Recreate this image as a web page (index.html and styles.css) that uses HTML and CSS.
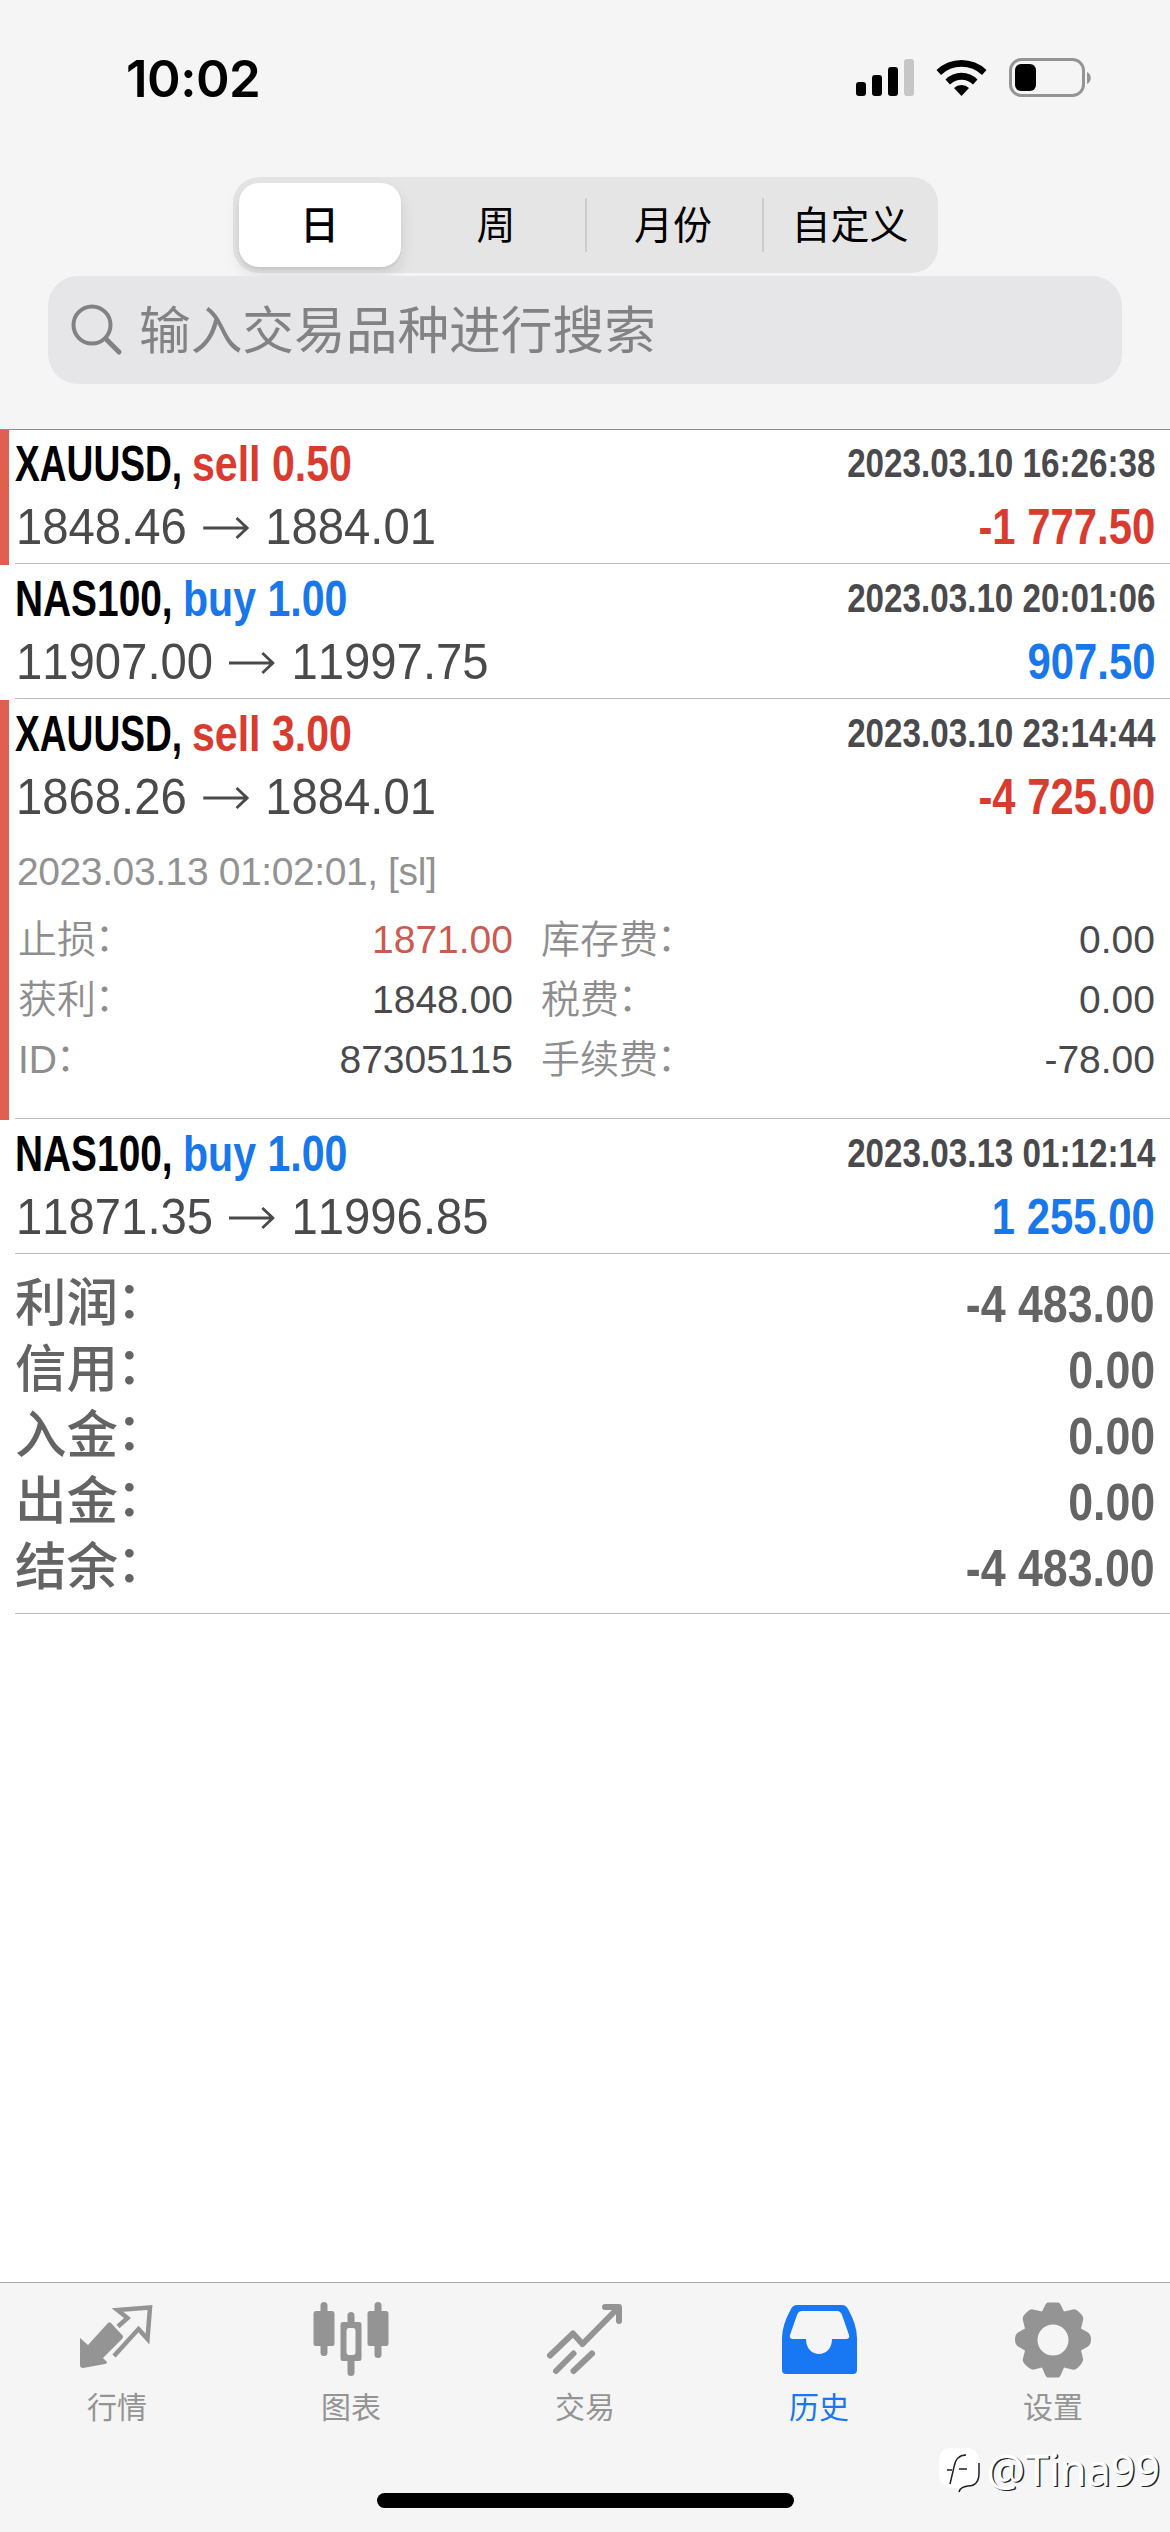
FILE: index.html
```html
<!DOCTYPE html>
<html lang="zh-CN">
<head>
<meta charset="utf-8">
<title>历史</title>
<link rel="stylesheet" href="styles.css">
</head>
<body>
<div class="screen">
  <header class="header">
    <div class="status">
      <span class="clock">10:02</span>
      <svg class="status-icons" width="240" height="44" viewBox="0 0 240 44">
        <rect x="1" y="26" width="10" height="14" rx="3"/>
        <rect x="17" y="19" width="10" height="21" rx="3"/>
        <rect x="33" y="11" width="10" height="29" rx="3"/>
        <rect x="49" y="3" width="10" height="37" rx="3" fill="#c6c6c6"/>
        <path d="M81.500 14A36 36 0 0 1 131.500 14L127 19A29.500 29.500 0 0 0 86 19Z"/>
        <path d="M90.500 23.500A22.500 22.500 0 0 1 122.500 23.500L118 28.500A16.500 16.500 0 0 0 95 28.500Z"/>
        <path d="M99 32A11 11 0 0 1 114 32L106.500 40Z"/>
        <rect x="155.500" y="3.500" width="73" height="36" rx="11" fill="none" stroke="#949494" stroke-width="3"/>
        <rect x="160" y="8" width="21" height="27" rx="6"/>
        <path d="M232 16C237 18 237 26 232 28Z" fill="#949494"/>
      </svg>
    </div>
    <nav class="segments">
      <span class="segment segment-active">日</span>
      <span class="segment">周</span>
      <span class="segment segment-split">月份</span>
      <span class="segment segment-split">自定义</span>
    </nav>
    <div class="search">
      <svg width="52" height="52" viewBox="0 0 52 52" fill="none" stroke="#828285" stroke-linecap="round">
        <circle cx="21" cy="21" r="18.500" stroke-width="4"/>
        <path d="M35 35L48 48" stroke-width="5"/>
      </svg>
      <span>输入交易品种进行搜索</span>
    </div>
  </header>

  <main class="list">
    <section class="deal deal-loss">
      <div class="line"><span class="title xau">XAUUSD,</span><span class="title side sell">sell 0.50</span><span class="time">2023.03.10 16:26:38</span></div>
      <div class="line"><span class="prices">1848.46<svg class="arrow" viewBox="0 0 48 24"><path d="M0 12H46M35 2L46 12L35 22"/></svg>1884.01</span><span class="result sell">-1 777.50</span></div>
    </section>
    <section class="deal">
      <div class="line"><span class="title nas">NAS100,</span><span class="title side buy">buy 1.00</span><span class="time">2023.03.10 20:01:06</span></div>
      <div class="line"><span class="prices">11907.00<svg class="arrow" viewBox="0 0 48 24"><path d="M0 12H46M35 2L46 12L35 22"/></svg>11997.75</span><span class="result buy">907.50</span></div>
    </section>
    <section class="deal deal-loss deal-open">
      <div class="line"><span class="title xau">XAUUSD,</span><span class="title side sell">sell 3.00</span><span class="time">2023.03.10 23:14:44</span></div>
      <div class="line"><span class="prices">1868.26<svg class="arrow" viewBox="0 0 48 24"><path d="M0 12H46M35 2L46 12L35 22"/></svg>1884.01</span><span class="result sell">-4 725.00</span></div>
      <div class="closed">2023.03.13 01:02:01, [sl]</div>
      <div class="details">
        <span class="label">止损<span class="colon">：</span></span><span class="value stop">1871.00</span><span class="label">库存费<span class="colon">：</span></span><span class="value">0.00</span>
        <span class="label">获利<span class="colon">：</span></span><span class="value">1848.00</span><span class="label">税费<span class="colon">：</span></span><span class="value">0.00</span>
        <span class="label">ID<span class="colon">：</span></span><span class="value">87305115</span><span class="label">手续费<span class="colon">：</span></span><span class="value">-78.00</span>
      </div>
    </section>
    <section class="deal">
      <div class="line"><span class="title nas">NAS100,</span><span class="title side buy">buy 1.00</span><span class="time">2023.03.13 01:12:14</span></div>
      <div class="line"><span class="prices">11871.35<svg class="arrow" viewBox="0 0 48 24"><path d="M0 12H46M35 2L46 12L35 22"/></svg>11996.85</span><span class="result buy">1 255.00</span></div>
    </section>
    <section class="totals">
      <div class="total"><span>利润<span class="colon">：</span></span><span class="sum">-4 483.00</span></div>
      <div class="total"><span>信用<span class="colon">：</span></span><span class="sum">0.00</span></div>
      <div class="total"><span>入金<span class="colon">：</span></span><span class="sum">0.00</span></div>
      <div class="total"><span>出金<span class="colon">：</span></span><span class="sum">0.00</span></div>
      <div class="total"><span>结余<span class="colon">：</span></span><span class="sum">-4 483.00</span></div>
    </section>
  </main>

  <footer class="footer">
    <nav class="tabs">
      <span class="tab">
        <svg class="tab-icon" viewBox="0 0 80 80"><path d="M3 36L11 43L31 21Q32.500 19.500 34 21L46 34Q46 36 45 37L26 56L30 60Q30 62 28 62L6 66Q3 66 3 63Z"/><path d="M41 24.500L50.500 16L40.500 8L73 5.500L70.500 37L61.500 27L37 54" fill="none" stroke="currentColor" stroke-width="4.500"/></svg>
        行情
      </span>
      <span class="tab">
        <svg class="tab-icon" viewBox="0 0 80 80"><rect x="2.500" y="9" width="21" height="35" rx="2.500"/><rect x="9.500" y="0" width="7" height="54" rx="3.500"/><rect x="56.500" y="9" width="21" height="35" rx="2.500"/><rect x="63.500" y="0" width="7" height="56" rx="3.500"/><path d="M36.500 13.500a3.500 3.500 0 0 1 7 0V20H48Q50.500 20 50.500 22.500V56.500Q50.500 59 48 59H43.500V70.500a3.500 3.500 0 0 1-7 0V59H32Q29.500 59 29.500 56.500V22.500Q29.500 20 32 20H36.500ZM38 26Q35.500 26 35.500 29V50Q35.500 53 38 53H42Q44.500 53 44.500 50V29Q44.500 26 42 26Z" fill-rule="evenodd"/></svg>
        图表
      </span>
      <span class="tab">
        <svg class="tab-icon" viewBox="0 0 80 80" fill="none" stroke="currentColor" stroke-width="6" stroke-linecap="round" stroke-linejoin="round"><path d="M5 53.500L28 31.500L37.500 42L73 6M60 5H74V19"/><path d="M11 69L28.500 51.500M28.500 69L47 51.500"/></svg>
        交易
      </span>
      <span class="tab tab-active">
        <svg class="tab-icon" viewBox="0 0 80 80"><path fill-rule="evenodd" d="M18 3H63Q67 3 69 7Q78 23 78 36V68Q78 72 74 72H7Q3 72 3 68V36Q3 23 12 7Q14 3 18 3ZM23 9Q19.500 9 18 13L11 33Q10 37 14 37H27C27 57 53 57 53 37H67Q71 37 70 33L63 13Q61.500 9 58 9Z"/></svg>
        历史
      </span>
      <span class="tab">
        <svg class="tab-icon" viewBox="-40 -37.500 80 80"><path fill-rule="evenodd" d="M-5 -37H5Q7 -37 8 -34L11 -28L20 -30Q23 -31 28.500 -25Q31 -22 30 -19L28 -11L35 -7Q38 -5 38 0Q38 5 35 7L28 11L30 19Q31 22 25 28Q22 31 19 30L11 28L8 35Q7 38 5 38H-5Q-7 38 -8 35L-11 28L-19 30Q-22 31 -28 25Q-31 22 -30 19L-28 11L-35 7Q-38 5 -38 0Q-38 -5 -35 -7L-28 -11L-30 -19Q-31 -22 -28.500 -25Q-23 -31 -20 -30L-11 -28L-8 -34Q-7 -37 -5 -37ZM0 -15A15.500 15.500 0 1 0 0 16A15.500 15.500 0 1 0 0 -15Z"/></svg>
        设置
      </span>
    </nav>
    <div class="home-bar"></div>
    <div class="watermark">
      <svg width="46" height="50" viewBox="0 0 46 50"><path d="M15 3H30Q43 3 43 18V28Q43 42 27 42L23 48L20 43Q3 43 3 28V18Q3 3 15 3Z" fill="#fff"/><path d="M43 18V28Q43 41 32 41Q24 42 23 47M30 10Q20 10 18 22L14 39M11 25H16M23 24H31" fill="none" stroke="#222" stroke-width="1.500"/></svg>
      <span>@Tina99</span>
    </div>
  </footer>
</div>
</body>
</html>
```
FILE: styles.css
```css
* { box-sizing: border-box; }

body {
  margin: 0;
  background: #fff;
  font-family: "Liberation Sans", "Noto Sans CJK SC", sans-serif;
  font-kerning: none;
}

.screen {
  width: 1170px;
  height: 2532px;
  display: flex;
  flex-direction: column;
  overflow: hidden;
}

/* Header */
.header {
  height: 430px;
  flex: none;
  display: flex;
  flex-direction: column;
  align-items: center;
  background: #f5f5f5;
  border-bottom: 1px solid #8c8c8c;
}

.status {
  width: 100%;
  height: 177px;
  padding: 56px 75px 0 126px;
  display: flex;
  justify-content: space-between;
}

.clock {
  font: 600 51px/46px Inter, sans-serif;
  letter-spacing: -0.5px;
}

.segments {
  width: 705px;
  height: 96px;
  padding: 6px 0 6px 6px;
  display: flex;
  border-radius: 26px;
  background: #e5e5e5;
}

.segment {
  width: 177px;
  flex: none;
  display: flex;
  align-items: center;
  justify-content: center;
  font-size: 39px;
  line-height: 1;
}

.segment-active {
  width: 162px;
  margin-right: 7px;
  border-radius: 20px;
  background: #fff;
  font-weight: 500;
  box-shadow: 0 8px 16px rgba(0, 0, 0, .1), 0 2px 3px rgba(0, 0, 0, .06);
}

.segment-split {
  background: linear-gradient(#ccc, #ccc) 0 50% / 2px 54px no-repeat;
}

.search {
  width: 1074px;
  height: 108px;
  margin-top: 3px;
  padding-left: 23px;
  display: flex;
  align-items: center;
  gap: 16px;
  border-radius: 30px;
  background: #e6e6e8;
  color: #828285;
  font-size: 51.700px;
  line-height: 1;
}

.search span { padding-top: 4px; }

/* Deals */
.list { flex: 1; }

.deal {
  height: 135px;
  padding: 2px 15px 0;
  background: linear-gradient(#bebebe, #bebebe) 15px calc(100% - 1px) / 100% 1px no-repeat;
}

.deal-loss {
  border-left: 9px solid #e05f4f;
  padding-left: 6px;
  background-position: 6px calc(100% - 1px);
}

.deal-open { height: 420px; }

.line {
  height: 63px;
  display: flex;
  align-items: center;
  white-space: pre;
}

.title,
.result,
.sum {
  font-weight: 700;
  font-size: 49.500px;
  line-height: 63px;
}

.title { transform-origin: 0 50%; }
.xau { width: 177px; transform: scaleX(.75); }
.nas { width: 168px; transform: scaleX(.785); }
.side { transform: scaleX(.83); }

.sell { color: #da3b2f; }
.buy { color: #1877ea; }

.time {
  margin-left: auto;
  color: #4a4a4d;
  font-weight: 700;
  font-size: 40px;
  transform: scaleX(.83);
  transform-origin: 100% 50%;
}

.prices {
  display: flex;
  align-items: center;
  padding-left: 1px;
  color: #4a4a4d;
  font-size: 49.500px;
  transform: scaleX(.955);
  transform-origin: 0 50%;
}

.arrow {
  width: 48px;
  height: 24px;
  margin: 2px 17px 0;
  fill: none;
  stroke: currentColor;
  stroke-width: 3;
}

.result {
  margin-left: auto;
  transform: scaleX(.845);
  transform-origin: 100% 50%;
}

.closed {
  height: 82px;
  padding: 21px 0 0 2px;
  color: #929292;
  font-size: 39px;
  line-height: 46px;
  letter-spacing: -0.400px;
}

.details {
  padding-left: 3px;
  display: grid;
  grid-template-columns: 160px 335px 188px 1fr;
  grid-auto-rows: 60px;
  align-items: center;
  font-size: 39px;
  line-height: 60px;
}

.label { color: #8e8e8e; white-space: nowrap; font-weight: 350; }
.label:nth-child(4n + 3) { padding-left: 28px; }
.value { color: #4a4a4d; text-align: right; }
.stop { color: #cb5a50; }

.colon {
  display: inline-block;
  transform: translate(-.03em, -.05em);
}

.totals {
  height: 360px;
  padding: 16px 15px 0;
  background: linear-gradient(#bebebe, #bebebe) 15px calc(100% - 1px) / 100% 1px no-repeat;
}

.total {
  height: 66px;
  display: flex;
  justify-content: space-between;
  color: #646464;
  font-weight: 500;
  font-size: 51.500px;
  line-height: 65px;
}

.sum {
  font-size: 52px;
  line-height: 66px;
  transform: scaleX(.86);
  transform-origin: 100% 50%;
}

/* Tab bar */
.footer {
  position: relative;
  height: 250px;
  flex: none;
  background: #f5f5f5;
  border-top: 1px solid #a8a8a8;
}

.tabs { display: flex; padding-top: 19px; }

.tab {
  flex: 1;
  display: flex;
  flex-direction: column;
  align-items: center;
  gap: 9px;
  color: #949494;
  font-size: 30px;
  line-height: 34px;
}

.tab-icon { width: 80px; height: 80px; }
.tab-icon:not([fill]) { fill: currentColor; }
.tab-active { color: #1877f2; }

.home-bar {
  width: 417px;
  height: 15px;
  margin: 68px auto 0;
  border-radius: 8px;
  background: #000;
}

.watermark {
  position: absolute;
  right: 10px;
  bottom: 37px;
  display: flex;
  align-items: center;
  gap: 4px;
  color: #fff;
  font: 400 43px/50px "Noto Sans", sans-serif;
  text-shadow: 1.500px 1px 0 #222;
}
```
